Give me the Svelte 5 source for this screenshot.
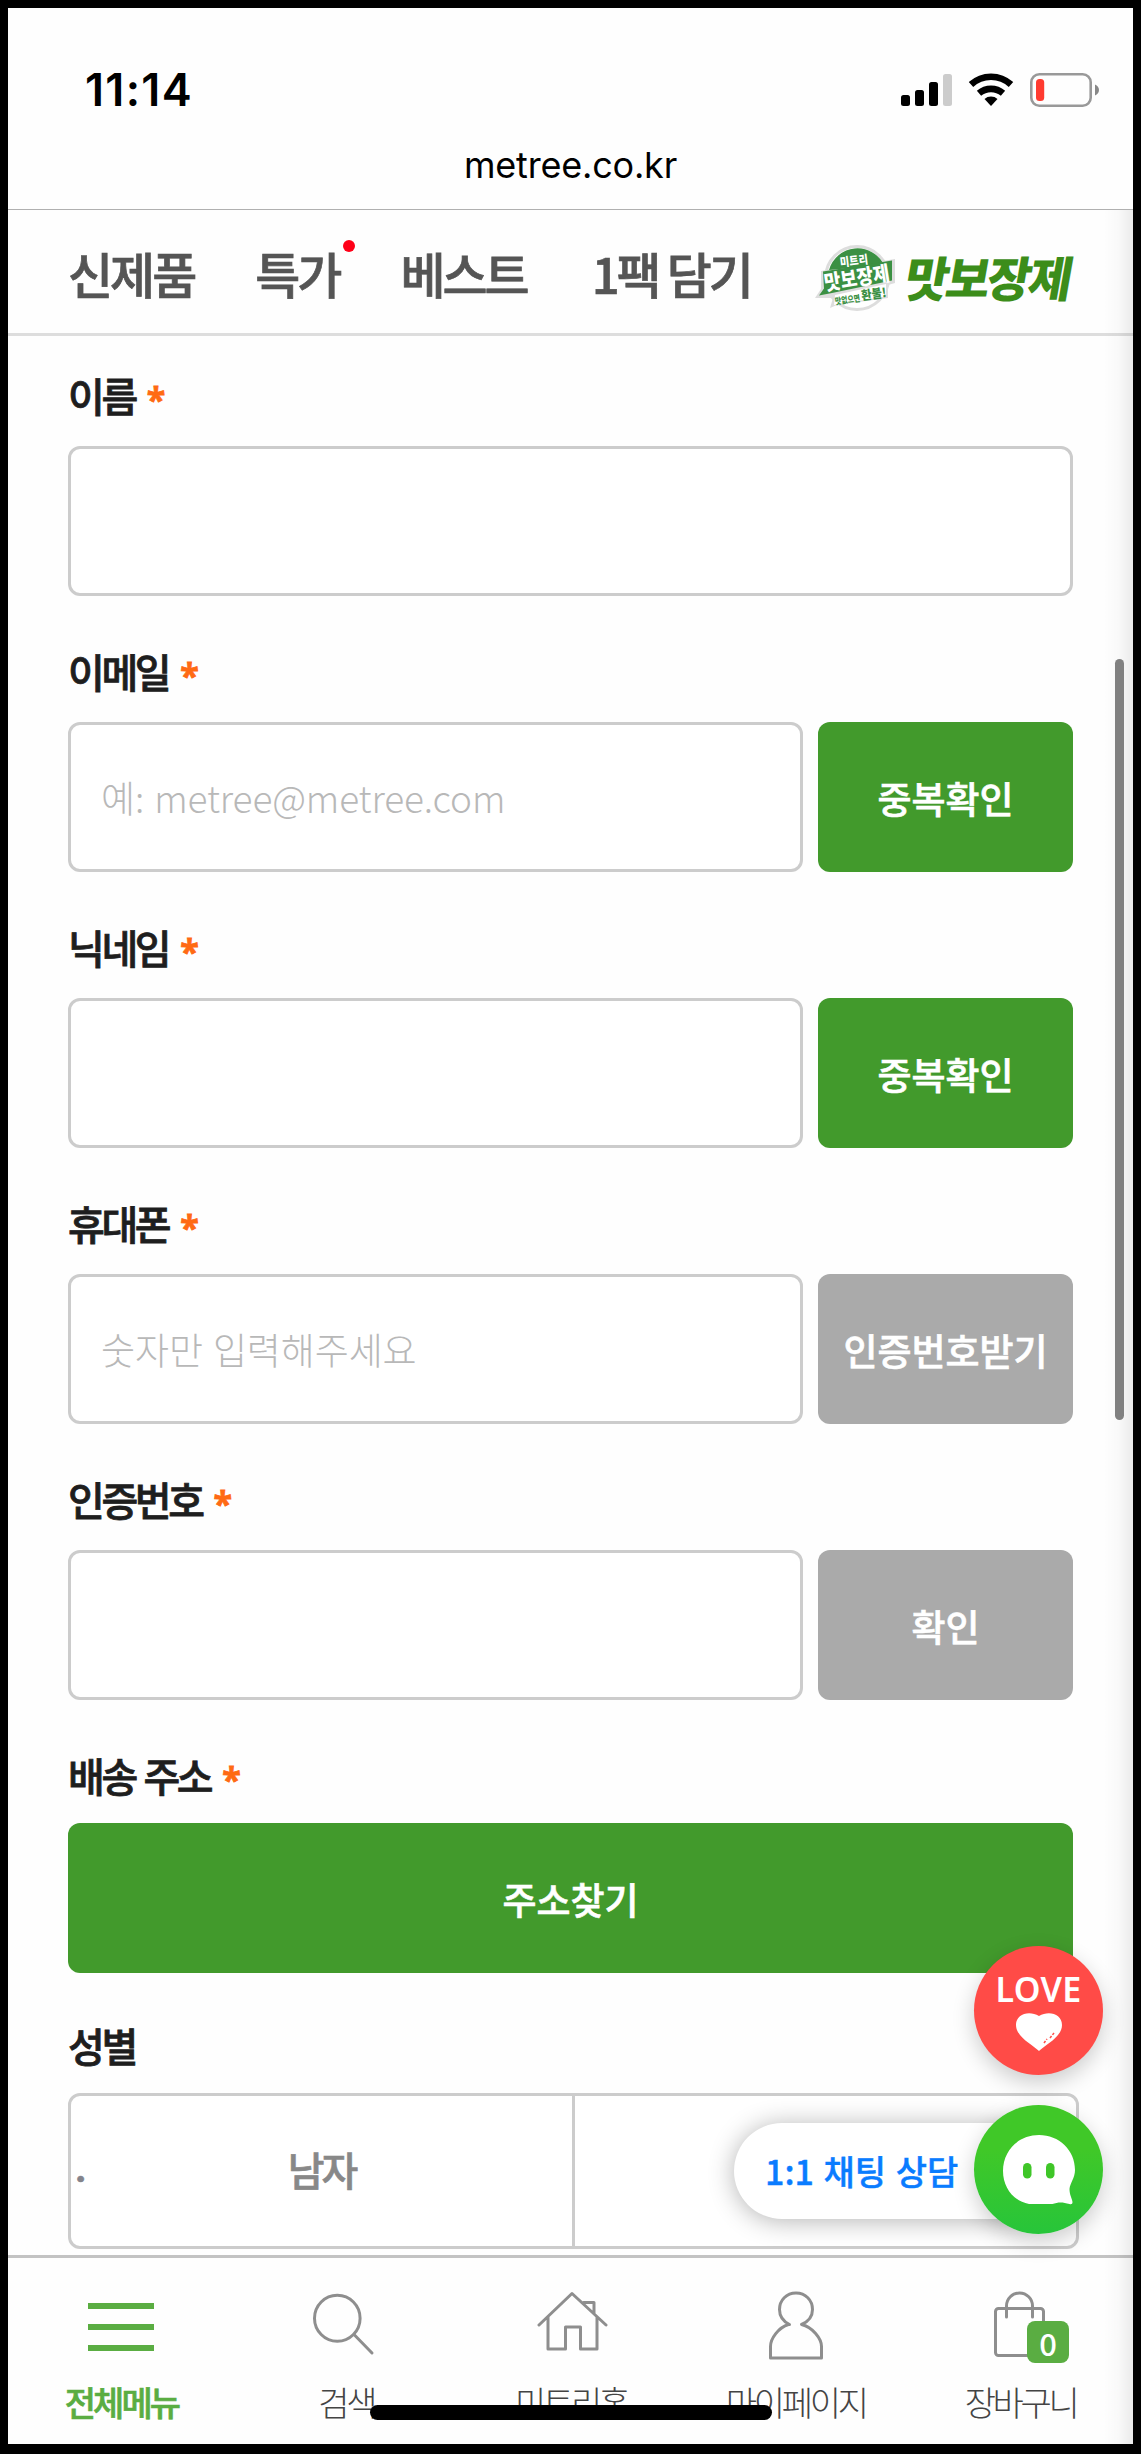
<script>
  let { cartCount = 0 } = $props();

  const tabs = [
    { label: "신제품" },
    { label: "특가", dot: true },
    { label: "베스트" },
    { label: "1팩 담기" },
  ];

  const fields = [
    { id: "name", label: "이름" },
    { id: "email", label: "이메일", placeholder: "예: metree@metree.com", action: "중복확인" },
    { id: "nickname", label: "닉네임", action: "중복확인" },
    { id: "phone", label: "휴대폰", placeholder: "숫자만 입력해주세요", action: "인증번호받기", disabled: true },
    { id: "code", label: "인증번호", action: "확인", disabled: true },
  ];
</script>

<div class="screen">
  <!-- Status bar -->
  <div class="status">
    <span class="time">11:14</span>
    <svg class="status-icons" width="200" height="36" viewBox="900 72 200 36">
      <rect x="901" y="95" width="9" height="11" rx="2.5" />
      <rect x="915" y="90" width="9" height="16" rx="2.5" />
      <rect x="929" y="82" width="9" height="24" rx="2.5" />
      <rect x="943" y="74" width="9" height="32" rx="2.5" fill="#ccc" />
      <g fill="none" stroke="#000" stroke-width="6.6">
        <path d="M971 84.5a29.5 29.5 0 0 1 40 0" />
        <path d="M979 93.3a18.5 18.5 0 0 1 24 0" />
      </g>
      <path d="M991 106l-6.5-7a10 10 0 0 1 13 0z" />
      <rect x="1031.3" y="74.3" width="59.4" height="31.4" rx="8" fill="none" stroke="#999" stroke-width="2.6" />
      <rect x="1036" y="79" width="8.2" height="22" rx="3.5" fill="#ff3b30" />
      <path d="M1095 84.5c2.500 1 4 3 4 5.500s-1.500 4.500-4 5.500z" fill="#888" />
    </svg>
  </div>
  <div class="address">metree.co.kr</div>

  <nav class="tabs">
    {#each tabs as tab}
      <a class="tab" href="#top">
        {tab.label}
        {#if tab.dot}<i class="dot"></i>{/if}
      </a>
    {/each}
    <a class="event" href="#top">
      <svg class="stamp" width="82" height="68" viewBox="0 0 82 68">
        <circle cx="42" cy="33" r="31.5" fill="#fff" stroke="#ddd" stroke-width="3" />
        <path d="M6 26L80 14v24l-7 2v13L22 60l-7 3 3-10-18 0 6-9z" fill="#ddd" />
        <path d="M14 25A29.500 29.500 0 0 1 69 20z" fill="#3b9043" />
        <path d="M8 26.500l69-11v20L17 48 4 50.500l5-7z" fill="#3b9043" />
        <path d="M20 50l51-11v12.500L23 59l-4 1z" fill="#fff" />
        <g font-weight="900" text-anchor="middle">
          <text transform="translate(39.500 20) rotate(-7)" font-size="12" fill="#fff" textLength="28" lengthAdjust="spacingAndGlyphs">미트리</text>
          <text transform="translate(43 40.500) rotate(-9)" font-size="21" fill="#fff" textLength="66" lengthAdjust="spacingAndGlyphs">맛보장제</text>
          <text transform="translate(33 58) rotate(-8)" font-size="9" fill="#3b9043" textLength="25" lengthAdjust="spacingAndGlyphs">맛없으면</text>
          <text transform="translate(59.500 53.500) rotate(-8)" font-size="12.5" fill="#3b9043" textLength="25" lengthAdjust="spacingAndGlyphs">환불!</text>
        </g>
      </svg>
      <span class="event-name">맛보장제</span>
    </a>
  </nav>

  <main class="form">
    {#each fields as field}
      <div class="field">
        <label for={field.id}>{field.label}<b>*</b></label>
        <div class="row">
          <input id={field.id} type="text" placeholder={field.placeholder} />
          {#if field.action}
            <button class="action" disabled={field.disabled}>{field.action}</button>
          {/if}
        </div>
      </div>
    {/each}
    <div class="field address-field">
      <span class="label">배송 주소<b>*</b></span>
      <button class="find">주소찾기</button>
    </div>
    <div class="field gender-field">
      <span class="label">성별</span>
      <div class="gender">
        <button><i class="point">.</i>남자</button>
        <button aria-label="성별"></button>
      </div>
    </div>
  </main>

  <footer class="bar">
    <a class="item active" href="#top">
      <svg width="74" height="74" viewBox="84 2288 74 74">
        <path d="M88 2303h66v6H88zM88 2324h66v6H88zM88 2345h66v6H88z" />
      </svg>
      전체메뉴
    </a>
    <a class="item" href="#top">
      <svg width="74" height="74" viewBox="309 2288 74 74">
        <ellipse cx="337.3" cy="2318.3" rx="22.8" ry="23" />
        <path d="M354 2334.500L372 2353" />
      </svg>
      검색
    </a>
    <a class="item" href="#top">
      <svg width="74" height="74" viewBox="534 2288 74 74">
        <path d="M539 2325L572 2293.500l34 31.500M548 2316.500v32.500h17.500V2327h15v22H597V2317M583.500 2302.500h10.500v11" />
      </svg>
      미트리홈
    </a>
    <a class="item" href="#top">
      <svg width="74" height="74" viewBox="759 2288 74 74">
        <path d="M789.500 2324.500c-6-3-10-8.500-10-15 0-9.500 7-16.500 16.500-16.500s16.500 7 16.500 16.500c0 6.500-4 12-11 15 11 2.500 20 14 20 22v11.500h-51V2346.500c0-8 8-19 18-22z" />
      </svg>
      마이페이지
    </a>
    <a class="item" href="#top">
      <svg width="74" height="74" viewBox="984 2288 74 74">
        <rect x="995.5" y="2308.5" width="48" height="47" rx="3" />
        <path d="M1006.500 2317v-11a13 13 0 0 1 26 0v11" />
      </svg>
      장바구니
      <span class="count">{cartCount}</span>
    </a>
  </footer>

  <div class="edge-shade"></div>
  <div class="scroll-thumb"></div>
  <button class="love">
    <span>LOVE</span>
    <svg width="48" height="40" viewBox="0 0 48 40">
      <path d="M24 39C18 33 1 25 1 13 1 2 14-2 24 4 34-2 47 2 47 13 47 25 30 33 24 39z" fill="#fff" />
      <path d="M29 31l3-4M35 26l4-5" stroke="#ff4b47" stroke-width="1.5" stroke-dasharray="2.500 1.500" />
    </svg>
  </button>
  <div class="chat-label">1:1 채팅 상담</div>
  <button class="chat" aria-label="채팅">
    <svg width="73" height="70" viewBox="0 0 73 70">
      <path d="M36 0C56 0 72 15 72 35c0 8-5 13-5.500 19 0 6 2.500 9 3 13 0 2-1 2.500-3 2-5-1-8-2-13-1-3 1-5 1-9 1H26C10 66 0 52 0 36 0 15 16 0 36 0z" fill="#fff" />
      <rect x="20" y="28" width="8.5" height="15.5" rx="4.25" fill="#3fc628" />
      <rect x="43" y="28" width="8.5" height="15.5" rx="4.25" fill="#3fc628" />
    </svg>
  </button>
  <div class="home-indicator"></div>
</div>

<style>
  :global(body) {
    margin: 0;
    background: #000;
  }

  .screen {
    position: relative;
    box-sizing: border-box;
    width: 1141px;
    height: 2454px;
    border: 8px solid #000;
    border-bottom-width: 10px;
    background: #fefefe;
    display: flex;
    flex-direction: column;
    overflow: hidden;
    font-family: "Noto Sans CJK KR", sans-serif;
  }

  a {
    color: inherit;
    text-decoration: none;
  }

  button {
    font: inherit;
    border: 0;
    padding: 0;
  }

  .status {
    height: 128px;
    box-sizing: border-box;
    padding: 64px 33px 0 77px;
    display: flex;
    justify-content: space-between;
    align-items: flex-start;
  }

  .time {
    font: 600 45px/36px Inter, sans-serif;
    letter-spacing: 1.3px;
  }

  .address {
    height: 74px;
    box-sizing: border-box;
    padding-top: 8px;
    text-align: center;
    font: 400 36px/42px Inter, sans-serif;
    letter-spacing: -0.2px;
    border-bottom: 1px solid #b0b0b0;
  }

  .tabs {
    display: flex;
    align-items: center;
    height: 123px;
    flex: none;
    padding-left: 60px;
    border-bottom: 3px solid #ddd;
    font-size: 49px;
    font-weight: 500;
    -webkit-text-stroke: 0.7px;
    letter-spacing: -3px;
    color: #555;
    line-height: 60px;
  }

  .tab {
    position: relative;
    top: 1px;
    margin-right: 61px;
    white-space: nowrap;
  }

  .tab:nth-child(3) {
    margin-right: 65px;
  }

  .tab:nth-child(4) {
    margin-right: 64px;
  }

  .dot {
    position: absolute;
    right: -16px;
    top: -3px;
    width: 12px;
    height: 12px;
    border-radius: 50%;
    background: #ff0018;
  }

  .event {
    display: flex;
    align-items: center;
    gap: 9px;
    padding-top: 14px;
    -webkit-text-stroke: 0;
  }

  .stamp {
    overflow: visible;
    letter-spacing: 0;
  }

  .event-name {
    margin-top: -6px;
    font-size: 48px;
    font-weight: 900;
    letter-spacing: -3px;
    color: #3c8d1a;
    transform: skewX(-10deg);
    white-space: nowrap;
  }

  .form {
    height: 1919px;
    flex: none;
    box-sizing: border-box;
    padding: 30px 60px 0;
  }

  .field {
    margin-bottom: 46px;
  }

  label,
  .label {
    display: flex;
    align-items: center;
    height: 58px;
    margin-bottom: 22px;
    font-size: 40px;
    font-weight: 500;
    -webkit-text-stroke: 0.8px;
    letter-spacing: -3.4px;
    word-spacing: 3px;
    color: #1e1e1e;
  }

  label b,
  .label b {
    margin: 7px 0 0 12px;
    font: 700 34px/40px "Open Sans", sans-serif;
    color: #ff6a13;
  }

  .row {
    display: flex;
    gap: 15px;
  }

  input {
    flex: 1;
    min-width: 0;
    height: 150px;
    box-sizing: border-box;
    padding: 0 30px;
    border: 3px solid #ccc;
    border-radius: 12px;
    background: #fff;
    font: 300 37px "Noto Sans CJK KR", sans-serif;
    letter-spacing: -0.1px;
    word-spacing: 2px;
  }

  input::placeholder {
    color: #b8b8b8;
    opacity: 1;
  }

  .action {
    width: 255px;
    padding-top: 2px;
    border-radius: 12px;
    background: #429a2c;
    color: #fff;
    font-size: 37px;
    font-weight: 500;
    -webkit-text-stroke: 0.6px;
  }

  .action:disabled {
    background: #aaa;
  }

  .address-field {
    margin-bottom: 43px;
  }

  .address-field .label,
  .gender-field .label {
    margin-bottom: 19px;
  }

  .find {
    display: block;
    width: 1005px;
    height: 150px;
    padding-top: 2px;
    border-radius: 12px;
    background: #429a2c;
    color: #fff;
    font-size: 37px;
    font-weight: 500;
    -webkit-text-stroke: 0.6px;
  }

  .gender {
    display: flex;
    width: 1011px;
  }

  .gender button {
    position: relative;
    flex: 1;
    height: 156px;
    padding-bottom: 5px;
    border: 3px solid #ccc;
    border-radius: 12px 0 0 12px;
    background: #fff;
    color: #888;
    font-size: 40px;
    font-weight: 500;
    -webkit-text-stroke: 0.6px;
    letter-spacing: -3px;
  }

  .gender button + button {
    margin-left: -3px;
    border-radius: 0 12px 12px 0;
  }

  .point {
    position: absolute;
    left: 4px;
    top: 43px;
    font: 700 40px/60px Roboto, sans-serif;
    color: #84848c;
  }

  .bar {
    flex: 1;
    display: flex;
    padding: 0 0 0 1px;
    border-top: 3px solid #c3c3c3;
  }

  .item {
    position: relative;
    flex: 1;
    display: flex;
    flex-direction: column;
    align-items: center;
    padding-top: 30px;
    font-size: 34px;
    font-weight: 300;
    letter-spacing: -3.3px;
    line-height: 79px;
    color: #444;
  }

  .item svg {
    fill: none;
    stroke: #8e8e8e;
    stroke-width: 3;
    stroke-linecap: round;
    stroke-linejoin: round;
  }

  .item.active {
    color: #5aad42;
    font-weight: 500;
    letter-spacing: -3px;
    -webkit-text-stroke: 0.6px;
  }

  .item.active svg {
    fill: #5aad42;
    stroke: none;
  }

  .count {
    position: absolute;
    left: 119px;
    top: 63px;
    width: 42px;
    height: 42px;
    border-radius: 8px;
    background: #5aad42;
    color: #fff;
    font: 500 31px/43px "Noto Sans CJK KR", sans-serif;
    letter-spacing: 0;
    text-align: center;
  }

  .edge-shade {
    position: absolute;
    right: 0;
    top: 202px;
    bottom: 0;
    width: 30px;
    background: linear-gradient(to right, rgba(0, 0, 0, 0), rgba(0, 0, 0, 0.02) 50%, rgba(0, 0, 0, 0.08));
  }

  .scroll-thumb {
    position: absolute;
    left: 1107px;
    top: 651px;
    width: 9px;
    height: 761px;
    border-radius: 5px;
    background: #808080;
  }

  .love,
  .chat {
    position: absolute;
    left: 966px;
    width: 129px;
    height: 129px;
    border-radius: 50%;
    display: flex;
    box-shadow: 0 8px 22px rgba(0, 0, 0, 0.2);
  }

  .love {
    top: 1938px;
    flex-direction: column;
    align-items: center;
    background: #ff4b47;
    color: #fff;
    font: 600 34px/34px "Noto Sans", sans-serif;
    letter-spacing: 0.3px;
  }

  .love span {
    margin: 26px 0 6px;
  }

  .chat {
    top: 2097px;
    align-items: flex-start;
    background: linear-gradient(#40c828 35%, #27c53a);
  }

  .chat svg {
    margin: 30px 0 0 29px;
  }

  .chat-label {
    position: absolute;
    left: 726px;
    top: 2115px;
    width: 310px;
    height: 96px;
    box-sizing: border-box;
    padding-left: 31px;
    border-radius: 48px;
    background: #fff;
    box-shadow: 0 2px 26px rgba(0, 0, 0, 0.3);
    color: #0a7cff;
    font-size: 34px;
    font-weight: 500;
    -webkit-text-stroke: 0.4px;
    word-spacing: 2px;
    line-height: 96px;
  }

  .home-indicator {
    position: absolute;
    left: 362px;
    top: 2397px;
    width: 402px;
    height: 15px;
    border-radius: 8px;
    background: #000;
  }
</style>
